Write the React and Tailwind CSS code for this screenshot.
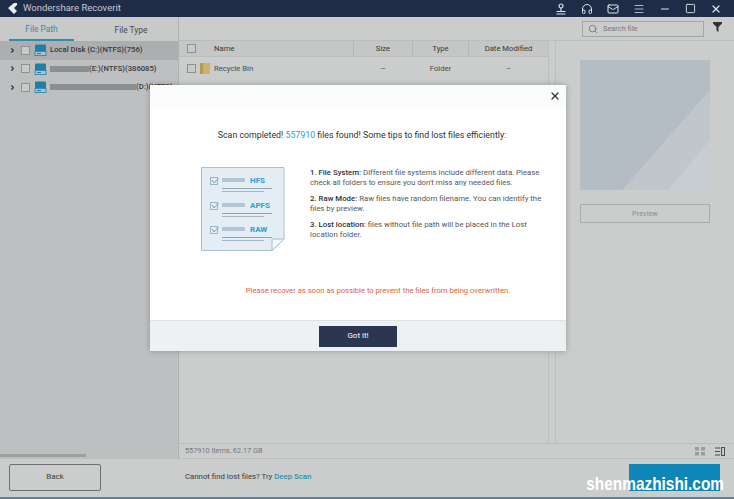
import { Search, Minus, Square, X, Menu, Mail, Headphones, ChevronRight } from 'lucide-react';

const drives = [
  { label: 'Local Disk (C:)(NTFS)(756)', bar: 0, active: true },
  { label: '(E:)(NTFS)(386085)', bar: 39 },
  { label: '(D:)(NTFS)', bar: 86 },
];

function Check({ className = '' }) {
  return <span className={`block w-[9px] h-[9px] shrink-0 border border-[#8f9192] bg-[#c9cbcb] ${className}`} />;
}

function DriveIcon() {
  return (
    <svg width="13" height="12" viewBox="0 0 13 12" className="shrink-0">
      <path d="M1 1.500Q1 .5 2 .5H11Q12 .5 12 1.500V7H1Z" fill="#1f7fa6" />
      <rect x="1" y="7.500" width="11" height="4" fill="#a9c3d0" stroke="#1f7fa6" strokeWidth=".8" />
      <rect x="3" y="9" width="4" height="1" fill="#1f7fa6" />
    </svg>
  );
}

function Folder() {
  return (
    <svg width="10" height="11" viewBox="0 0 10 11" className="shrink-0">
      <path d="M0 0h10v11H0Z" fill="#c9b36a" />
      <path d="M0 0h3v11H0Z" fill="#b09a55" />
    </svg>
  );
}

function Sheet() {
  const rows = [['HFS', 13], ['APFS', 38], ['RAW', 62]];
  return (
    <svg width="84" height="85" viewBox="0 0 84 85" className="shrink-0">
      <path d="M.5.5H83V72L71 83.500H.5Z" fill="#e3edf3" stroke="#a9c0cf" />
      <path d="M83 72H71V83.500Z" fill="#f6f9fb" stroke="#a9c0cf" />
      {rows.map(([name, y]) => (
        <g key={name}>
          <rect x="9.500" y={y - 2.5} width="7" height="7" fill="none" stroke="#9ab6c8" />
          <path d={`M11 ${y}l2 3l4.500-5`} fill="none" stroke="#7fa3b8" strokeWidth="1" />
          <rect x="21" y={y - 2} width="23" height="4" fill="#b3c5d2" />
          <text x="49" y={y + 3} fontSize="8" fontWeight="700" fill="#2a9fd0" fontFamily="Roboto, sans-serif">{name}</text>
          <rect x="21" y={y + 8} width="50" height="1" fill="#8aa5b8" />
          <rect x="21" y={y + 11} width="42" height="1" fill="#a3b8c6" />
        </g>
      ))}
    </svg>
  );
}

export default function App() {
  return (
    <div className="relative w-[734px] h-[499px] overflow-hidden flex flex-col bg-[#cbcccc] text-[#3a3b3c] text-[7.700px] font-['Roboto',sans-serif]">
      {/* title bar */}
      <div className="h-[17px] shrink-0 flex items-center bg-[#1f2c47] text-[#c3c9d3] pr-[12px]">
        <svg width="16" height="12" viewBox="0 0 16 12" className="ml-[3px] mr-[4px]">
          <path d="M11 0L5 5l6 6 3-3-3-3 3-3V0Z" fill="#e8edf2" />
        </svg>
        <span className="text-[9.500px]">Wondershare Recoverit</span>
        <div className="ml-auto flex items-center gap-[14px] text-[#dfe3e9]">
          <svg width="12" height="12" viewBox="0 0 12 12" fill="none" stroke="currentColor" strokeWidth="1.200">
            <circle cx="6" cy="3" r="2" /><path d="M6 5v3M1.500 8.500h9M1.500 11h9" />
          </svg>
          <Headphones size={12} strokeWidth={2} />
          <Mail size={12} strokeWidth={2} />
          <Menu size={12} strokeWidth={1.500} />
          <Minus size={12} strokeWidth={2} />
          <Square size={11} strokeWidth={2} />
          <X size={12} strokeWidth={2.500} />
        </div>
      </div>

      <div className="flex flex-1 min-h-0">
        {/* drive tree */}
        <div className="w-[179px] shrink-0 flex flex-col bg-[#bdbfc0] border-r border-[#b0b1b2]">
          <div className="h-[24px] shrink-0 flex bg-[#c8c9c9] text-[8.400px] pt-[3px]">
            <div className="w-[65px] ml-[9px] flex items-center justify-center border-b-2 border-[#2d8fae] text-[#3b8ba6]">File Path</div>
            <div className="flex-1 flex items-center justify-center pl-[10px] text-[#48494a]">File Type</div>
          </div>
          {drives.map((d) => (
            <div key={d.label} className={`h-[18.500px] flex items-center pl-[9px] gap-[4px] font-medium whitespace-nowrap overflow-hidden ${d.active ? 'bg-[#acaeaf]' : ''}`}>
              <ChevronRight size={7} strokeWidth={4} className="shrink-0 text-[#333]" />
              <Check className="ml-[1px] bg-[#c3c4c5]" />
              <DriveIcon />
              <span className="flex items-center text-[#38393a] ml-[-1px]">
                {d.bar > 0 && <span className="block h-[6px] bg-[#8c8e8f]" style={{ width: d.bar }} />}
                {d.label}
              </span>
            </div>
          ))}
          <div className="mt-auto h-[5px] shrink-0">
            <div className="w-[86px] h-[3px] bg-[#9d9fa0]" />
          </div>
        </div>

        {/* file table */}
        <div className="flex-1 min-w-0 flex flex-col">
          <div className="h-[24px] shrink-0 flex items-center justify-end border-b border-[#bcbdbe] pr-[12px] gap-[9px]">
            <div className="w-[122px] h-[16px] flex items-center gap-[5px] pl-[5px] border border-[#a4a6a7] text-[#77797a] text-[7.400px]">
              <Search size={10} strokeWidth={1.500} className="text-[#55585a]" />
              Search file
            </div>
            <svg width="9" height="10" viewBox="0 0 9 10" className="mb-[3px]">
              <path d="M0 0h9v1.500L5.500 5v5L3.500 8.500V5L0 1.500Z" fill="#2f3338" />
            </svg>
          </div>
          <div className="flex flex-1 min-h-0">
            <div className="w-[370px] shrink-0 flex flex-col border-r border-[#bcbdbe]">
              <div className="h-[16px] shrink-0 flex items-center border-b border-[#bcbdbe] bg-[#c5c6c6] text-[#38393a]">
                <div className="w-[175px] flex items-center pl-[8px] border-r border-[#b5b6b7] h-full"><Check /><span className="ml-[18px]">Name</span></div>
                <div className="w-[58px] text-center">Size</div>
                <div className="w-[57px] text-center border-x border-[#b5b6b7] h-full flex items-center justify-center">Type</div>
                <div className="flex-1 text-center">Date Modified</div>
              </div>
              <div className="h-[23px] shrink-0 flex items-center text-[#4a4b4c]">
                <div className="w-[175px] flex items-center pl-[8px] gap-[4px]">
                  <Check />
                  <Folder />
                  <span>Recycle Bin</span>
                </div>
                <div className="w-[58px] text-center">--</div>
                <div className="w-[57px] text-center">Folder</div>
                <div className="flex-1 text-center">--</div>
              </div>
              <div className="h-[23px] shrink-0 flex items-center pl-[8px] gap-[4px]">
                <Check />
                <Folder />
              </div>
            </div>
            <div className="w-[7px] shrink-0 border-r border-[#bcbdbe]" />
            <div className="flex-1 flex flex-col items-center pt-[19px]">
              <div className="relative w-[130px] h-[130px] bg-[#b5bdc4] overflow-hidden">
                <svg width="130" height="130" viewBox="0 0 130 130" className="absolute inset-0">
                  <path d="M130 30L42 130H130Z" fill="#bfc6cc" />
                  <path d="M130 80L88 130H130Z" fill="#c8cdd1" />
                </svg>
              </div>
              <div className="w-[130px] h-[19px] mt-[14px] flex items-center justify-center border border-[#a9abac] text-[#8e9091] text-[7.400px]">Preview</div>
            </div>
          </div>
          {/* status row */}
          <div className="h-[16px] shrink-0 flex items-center pl-[6px] pr-[9px] border-y border-[#bcbdbe] text-[#77797a] text-[7.300px]">
            557910 items, 62.17 GB
            <svg width="10" height="9" viewBox="0 0 10 9" className="ml-auto" fill="#9a9c9d">
              <rect width="4" height="3.500" /><rect x="6" width="4" height="3.500" />
              <rect y="5" width="4" height="3.500" /><rect x="6" y="5" width="4" height="3.500" />
            </svg>
            <svg width="10" height="9" viewBox="0 0 10 9" className="ml-[10px]" fill="none" stroke="#4b4d4f">
              <path d="M0 1h5M0 4.500h5M0 8h5" /><rect x="6.500" y=".5" width="3" height="8" />
            </svg>
          </div>
        </div>
      </div>

      {/* bottom bar */}
      <div className="h-[40px] shrink-0 flex items-center border-b-2 border-[#5d7f99] pl-[9px] pr-[14px] pb-[2px]">
        <div className="w-[92px] h-[27px] flex items-center justify-center rounded-[2px] border border-[#6d6f70] text-[#3e3f40] text-[8px]">Back</div>
        <div className="ml-[84px] text-[7.800px] text-[#3a3b3c]">Cannot find lost files? Try <span className="font-medium text-[#2d8fae]">Deep Scan</span></div>
        <div className="ml-auto w-[91px] h-[27px] bg-[#0f86b8]" />
      </div>

      {/* modal */}
      <div className="absolute left-[150px] top-[85px] w-[416px] h-[266px] flex flex-col bg-white shadow-[0_0_6px_rgba(0,0,0,0.25)]">
        <div className="h-[22px] shrink-0 flex items-center justify-end pr-[5px] bg-[#fbfcfc]">
          <X size={12} strokeWidth={2.500} className="text-[#30343a]" />
        </div>
        <div className="flex-1 flex flex-col items-center">
          <div className="mt-[22px] ml-[8px] text-[8.800px] text-[#2f3133]">
            Scan completed! <span className="text-[#2a9fc9]">557910</span> files found! Some tips to find lost files efficiently:
          </div>
          <div className="mt-[25px] w-full flex pl-[51px]">
            <Sheet />
            <div className="ml-[25px] pt-[1px] w-[238px] flex flex-col gap-[6px] text-[7.800px] leading-[10px] text-[#55585b]">
              <p><b className="font-medium text-[#2f3133]">1. File System:</b> Different file systems include different data. Please check all folders to ensure you don't miss any needed files.</p>
              <p><b className="font-medium text-[#2f3133]">2. Raw Mode:</b> Raw files have random filename. You can identify the files by preview.</p>
              <p><b className="font-medium text-[#2f3133]">3. Lost location:</b> files without file path will be placed in the Lost location folder.</p>
            </div>
          </div>
          <div className="mt-[33px] ml-[40px] text-[7.650px] text-[#dd6541]">Please recover as soon as possible to prevent the files from being overwritten.</div>
        </div>
        <div className="h-[31px] shrink-0 flex items-center justify-center bg-[#eef1f3] border-t border-[#dde1e4]">
          <div className="w-[78px] h-[21px] flex items-center justify-center bg-[#2b3650] text-white text-[8px]">Got it!</div>
        </div>
      </div>

      {/* watermark */}
      <div className="absolute right-[10px] bottom-[5px] text-white font-bold text-[19px] leading-[20px] font-['Liberation_Sans',sans-serif] origin-right scale-x-[0.81]">shenmazhishi.com</div>
    </div>
  );
}
